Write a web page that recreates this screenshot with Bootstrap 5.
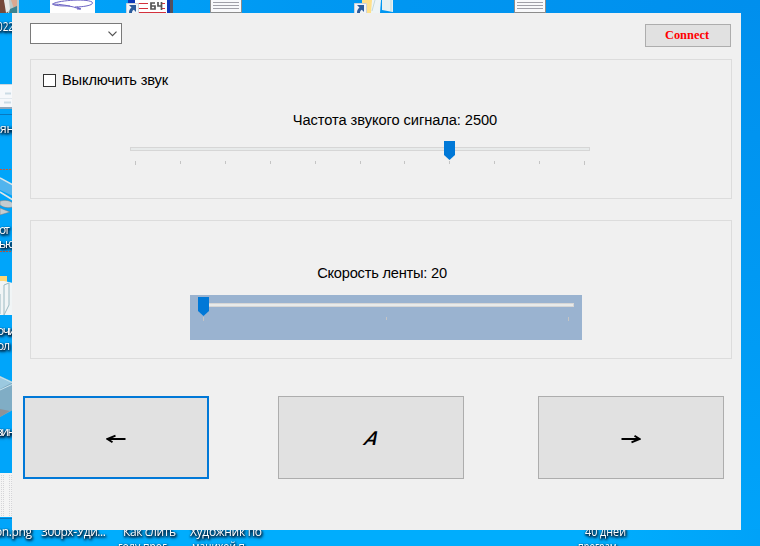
<!DOCTYPE html>
<html lang="ru">
<head>
<meta charset="utf-8">
<meta name="viewport" content="width=device-width, initial-scale=1">
<title>Connect</title>
<link href="https://cdn.jsdelivr.net/npm/bootstrap@5.3.0/dist/css/bootstrap.min.css" rel="stylesheet">
<style>
body{width:760px;height:546px;background:#00a5fa;font:14.67px/18px "Liberation Sans",Arial,sans-serif;color:#000}
.desktop{width:760px;height:546px}
.desktop text{font:12px "Open Sans","Noto Sans",sans-serif;fill:#fff}
.labels{filter:drop-shadow(1px 1px 1px #001a33) drop-shadow(0 1px 1px #00213f)}
.app-window{left:12px;top:13px;width:729px;height:517px;background:#f0f0f0;padding:10px 9px 0 18px}
.combo{width:92px;height:21px;border:1px solid #7a7a7a;padding-right:4px}
.connect{width:86px;height:23px;margin:1px 1px 0 0;padding:0 2px 0 0;border:1px solid #adadad;background:#e1e1e1;color:#f00;font:bold 12.4px/21px "Liberation Serif",serif}
.group{width:702px;border:1px solid #dcdcdc}
.group-sound{height:140px;margin-top:12px}
.group-belt{height:139px;margin-top:21px}
.form-check-input.check{width:13px;height:13px;border:1px solid #333;border-radius:0;margin:0;background:#fff}
.sound-row{margin:11px 0 0 12px;gap:6px;height:18px;letter-spacing:-.17px}
.sound-title{margin:22px 0 0 28px;letter-spacing:-.07px}
.belt-title{margin:43px 0 0 2px;letter-spacing:-.23px}
.track-sound{width:462px;height:30px;margin:10px 0 0 98px}
.track-belt{width:392px;height:45px;margin:13px 0 0 159px;background:#9ab3d0}
.actions{margin:37px 8px 0 -7px}
.pad{width:186px;height:83px;border:1px solid #adadad;background:#e1e1e1;font:italic 700 19px/20px Lato,sans-serif}
.pad svg{margin-top:2px}
.pad-centre{margin:0 74px 0 69px}
.pad-letter{display:inline-block;margin:-2px 0 0 3px;transform:skewX(-22deg);font-size:19px}
.pad.focused{border:2px solid #0078d7}
</style>
<script src="https://cdn.jsdelivr.net/npm/bootstrap@5.3.0/dist/js/bootstrap.bundle.min.js"></script>
</head>
<body class="m-0 overflow-hidden position-relative">
<svg class="desktop d-block" viewBox="0 0 760 546">
  <defs>
    <linearGradient id="top" x1="0" x2="1"><stop offset="0" stop-color="#00a5fa"/><stop offset=".4" stop-color="#0098f2"/><stop offset="1" stop-color="#008fed"/></linearGradient>
    <linearGradient id="side" x1="0" x2="0" y1="0" y2="1"><stop offset="0" stop-color="#008fed"/><stop offset=".5" stop-color="#0099f3"/><stop offset="1" stop-color="#00a4fa"/></linearGradient>
    <linearGradient id="low" x1="0" x2="1"><stop offset="0" stop-color="#00adfd"/><stop offset=".8" stop-color="#00adfd"/><stop offset="1" stop-color="#00a2f8"/></linearGradient>
  </defs>
  <rect width="760" height="14" fill="url(#top)"/>
  <rect x="740" width="20" height="546" fill="url(#side)"/>
  <rect y="529" width="760" height="17" fill="url(#low)"/>
  <!-- photo -->
  <rect width="19" height="13" fill="#b9c9c9"/><path d="M0 0h4l4 13H0z" fill="#754a3b"/><path d="M4 0h5l1 10-4 3z" fill="#e8ecea"/><path d="M11 0h6v6l-3 3z" fill="#d9a890"/><path d="M10 9l7-3v7h-8z" fill="#3a8290"/>
  <!-- sketch -->
  <rect x="50" width="45" height="13" fill="#fff"/><path d="M70 6c-6 0-17 0-17-2C55 1 85-2 92 2c3 3-8 5-17 5M52 4c8 0 20 2 28 5M77 7l4 2-4 0" fill="none" stroke="#6c63c4" stroke-width="1"/>
  <!-- emulator shortcut -->
  <path d="M128 0h44v13h-44z" fill="#0b36b8"/><path d="M170 0h3v13h-3z" fill="#55505c"/><path d="M135 0h32v13h-32z" fill="#fff"/><path d="M138 3.500h10M138 8.500h10M162 3.500h3M162 8.500h3M138 12.500h28" stroke="#d3313d"/><path d="M155 3h-4v6h4V6h-4M158 2v4h4M161.500 2v8" fill="none" stroke="#555" stroke-width="1.700"/>
  <path d="M126.500 3.500h12V14h-12z" fill="#f1f4f8" stroke="#ccd2d8"/><path d="M129 5h7v7l-2.200-2.200C132 11 132 12 132 13h-3c0-3 1-4 2.500-5.500z" fill="#2b5b9c"/>
  <!-- text documents -->
  <g id="doc"><path d="M210.500-1h31v13.500h-31z" fill="#f8f9fb" stroke="#8c8c8c"/><path d="M213 2.500h26M213 5.500h26M213 8.500h26" stroke="#a0a0a8"/></g>
  <use href="#doc" x="304"/>
  <!-- folder shortcut -->
  <path d="M362 0h10v13h-10z" fill="#ffe08a"/><path d="M372 0h9l-1 13h-9z" fill="#eef4f6"/><path d="M382 0h11v12l-11-2z" fill="#e7f0f1"/><path d="M391 0v11M375 0l-3 11" stroke="#c3d9dc"/>
  <path d="M354.500 3.500h12V14h-12z" fill="#f1f4f8" stroke="#ccd2d8"/><path d="M357 5h7v7l-2.200-2.200C360 11 360 12 360 13h-3c0-3 1-4 2.500-5.500z" fill="#2b5b9c"/>
  <!-- left column -->
  <rect y="84" width="13" height="25" fill="#f6f8fb"/><path d="M0 84.500h13" stroke="#ccd6df"/><path d="M5 93.500h6M4 102.500h7" stroke="#cbdbe5" stroke-width="2"/><path d="M0 98.500h12" stroke="#e1e8ee"/><rect y="107" width="13" height="2" fill="#8fa6ba"/><path d="M0 114.500h13" stroke="#0878bf"/>
  <path d="M0 169.500h13M0 251.500h13" stroke="#c35a3a" stroke-dasharray="2 1"/>
  <path d="M0 178l13 8v10L0 190z" fill="#51b4ee"/><path d="M0 178l13 7M0 192l13 8" stroke="#dce5e8" stroke-width="1.500"/><path d="M0 201q8-2 13 2v4q-8 2-13-2zM0 208l10 4-10 3z" fill="#c3ccd0" stroke="#707a80" stroke-width=".5"/>
  <path d="M0 276h7v6H0z" fill="#ffd875"/><path d="M0 281h4l9 2v32H0z" fill="#f1f5f6"/><path d="M4 285l5-2v22l-5 10zM0 294v20" fill="none" stroke="#9cbac2"/>
  <path d="M0 376l13 6v28L0 417z" fill="#80adc5"/><path d="M0 376l13 6-13 7z" fill="#9bc9df"/><path d="M0 377l13 6M0 390l13-6" stroke="#c7e4ee"/><path d="M0 409l10 2-10 6z" fill="#8c9298"/>
  <rect y="473" width="13" height="44" fill="#f4f4f4"/><path d="M1.500 475v41M3.500 475v41M9.500 475v41M11.500 475v41" stroke="#d5d5d8" stroke-dasharray="1 1"/><path d="M0 518.500h13" stroke="#0878bf"/>
  <g class="labels">
    <text x="-3" y="31" textLength="17" lengthAdjust="spacingAndGlyphs">022</text>
    <text x="0" y="133" textLength="14">ян</text>
    <text x="-1" y="234" textLength="11">от</text>
    <text x="-1" y="248" textLength="16">ью</text>
    <text x="-3" y="335" textLength="19">очи</text>
    <text x="-3" y="350" textLength="13">ол</text>
    <text x="-4" y="436" textLength="19">вин</text>
    <text x="-5" y="536" textLength="37">on.png</text>
    <text x="41" y="536" textLength="65">300px-Уди...</text>
    <text x="123" y="536" textLength="53">Как слить</text>
    <text x="118" y="551" textLength="57" lengthAdjust="spacingAndGlyphs">голу прог...</text>
    <text x="190" y="536" textLength="72">Художник по</text>
    <text x="192" y="551" textLength="61" lengthAdjust="spacingAndGlyphs">мачихой п...</text>
    <text x="585" y="536" textLength="41" lengthAdjust="spacingAndGlyphs">40 дней</text>
    <text x="578" y="551" textLength="46" lengthAdjust="spacingAndGlyphs">програм...</text>
  </g>
</svg>

<main class="app-window position-absolute">
  <div class="d-flex justify-content-between">
    <div class="combo bg-white d-flex align-items-center justify-content-end" role="combobox" aria-expanded="false" aria-label="Порт">
      <svg width="9" height="6" viewBox="0 0 9 6"><path d="M.5.700l4 4 4-4" fill="none" stroke="#505050" stroke-width="1.200"/></svg>
    </div>
    <button class="connect">Connect</button>
  </div>

  <section class="group group-sound">
    <div class="sound-row d-flex align-items-center">
      <input class="check form-check-input" type="checkbox" id="mute">
      <label for="mute">Выключить звук</label>
    </div>
    <div class="sound-title text-center">Частота звукого сигнала: 2500</div>
    <svg class="track-sound d-block" viewBox="0 0 462 30" shape-rendering="crispEdges">
      <path d="M1.500 8.500h459v3h-459z" fill="#e7eaea" stroke="#d6d6d6"/>
      <path d="M6.500 22v4M51.500 22v3M96.500 22v3M141.500 22v3M186.500 22v3M231.500 22v3M275.500 22v3M320.500 22v3M365.500 22v3M410.500 22v3M455.500 22v4" stroke="#c4c4c4"/>
      <path d="M315 2h11v14l-5.500 5-5.500-5z" fill="#0078d7" shape-rendering="auto"/>
    </svg>
  </section>

  <section class="group group-belt">
    <div class="belt-title text-center">Скорость ленты: 20</div>
    <svg class="track-belt d-block" viewBox="0 0 392 45" shape-rendering="crispEdges">
      <path d="M8.500 8.500h375v3h-375z" fill="#e7eaea" stroke="#d6d6d6"/>
      <path d="M13.500 22v4M196.500 22v3M378.500 22v4" stroke="#c4c4c4"/>
      <path d="M8 2h11v14l-5.500 5-5.500-5z" fill="#0078d7" shape-rendering="auto"/>
    </svg>
  </section>

  <div class="actions d-flex">
    <button class="pad focused p-0 d-flex align-items-center justify-content-center flex-shrink-0" aria-label="Влево">
      <svg width="20" height="10" viewBox="0 0 20 10"><path d="M1.500 5H19.500M9.500 1.700L1.500 5l5 3.300" fill="none" stroke="#000" stroke-width="1.900"/></svg>
    </button>
    <button class="pad pad-centre p-0 flex-shrink-0"><span class="pad-letter">A</span></button>
    <button class="pad p-0 d-flex align-items-center justify-content-center flex-shrink-0" aria-label="Вправо">
      <svg width="20" height="10" viewBox="0 0 20 10"><path d="M.5 5H18.500M13.500 1.700l5 3.300-8 3.300" fill="none" stroke="#000" stroke-width="1.900"/></svg>
    </button>
  </div>
</main>
</body>
</html>
